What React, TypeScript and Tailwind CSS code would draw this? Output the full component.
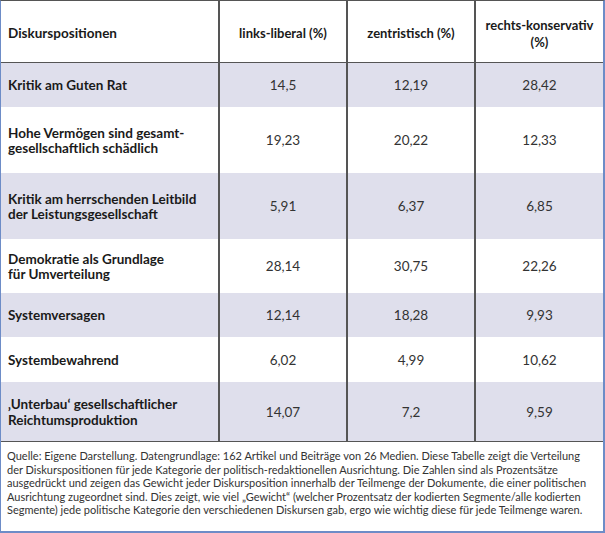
import React from "react";

type Row = { label: React.ReactNode; a: string; b: string; c: string; h: string; shaded: boolean };

const rows: Row[] = [
  { label: "Kritik am Guten Rat", a: "14,5", b: "12,19", c: "28,42", h: "h-[44px]", shaded: true },
  { label: <>Hohe Vermögen sind gesamt-<br />gesellschaftlich schädlich</>, a: "19,23", b: "20,22", c: "12,33", h: "h-[66px]", shaded: false },
  { label: <>Kritik am herrschenden Leitbild<br />der Leistungsgesellschaft</>, a: "5,91", b: "6,37", c: "6,85", h: "h-[66px]", shaded: true },
  { label: <>Demokratie als Grundlage<br />für Umverteilung</>, a: "28,14", b: "30,75", c: "22,26", h: "h-[54px]", shaded: false },
  { label: "Systemversagen", a: "12,14", b: "18,28", c: "9,93", h: "h-[44px]", shaded: true },
  { label: "Systembewahrend", a: "6,02", b: "4,99", c: "10,62", h: "h-[45px]", shaded: false },
  { label: <>‚Unterbau‘ gesellschaftlicher<br />Reichtumsproduktion</>, a: "14,07", b: "7,2", c: "9,59", h: "h-[59px]", shaded: true },
];

const captionLines = [
  "Quelle: Eigene Darstellung. Datengrundlage: 162 Artikel und Beiträge von 26 Medien. Diese Tabelle zeigt die Verteilung",
  "der Diskurspositionen für jede Kategorie der politisch-redaktionellen Ausrichtung. Die Zahlen sind als Prozentsätze",
  "ausgedrückt und zeigen das Gewicht jeder Diskursposition innerhalb der Teilmenge der Dokumente, die einer politischen",
  "Ausrichtung zugeordnet sind. Dies zeigt, wie viel „Gewicht“ (welcher Prozentsatz der kodierten Segmente/alle kodierten",
  "Segmente) jede politische Kategorie den verschiedenen Diskursen gab, ergo wie wichtig diese für jede Teilmenge waren.",
];

export default function App() {
  return (
    <div
      className="w-[605px] h-[533px] bg-white border-t border-t-[#555] border-l border-l-[#6d8cc7] border-r-2 border-r-[#6d8cc7] border-b-2 border-b-[#6d8cc7] flex flex-col text-[#1a1a1a]"
      style={{ fontFamily: "Lato, 'Noto Sans', sans-serif" }}
    >
      <div className="shrink-0 grid grid-cols-[217px_128px_128px_129px] h-[62px] border-b border-b-[#555] font-bold text-[13px] leading-[16.5px]">
        <div className="flex items-center pl-[7px] pt-[4px] text-[13.5px]">Diskurspositionen</div>
        <div className="flex items-center justify-center border-l-2 border-l-[#555] pt-[4px]">links-liberal (%)</div>
        <div className="flex items-center justify-center border-l-2 border-l-[#555] pt-[4px]">zentristisch (%)</div>
        <div className="flex items-center justify-center text-center border-l-2 border-l-[#555] pt-[4px]">rechts-konservativ<br />(%)</div>
      </div>
      {rows.map((r, i) => (
        <div
          key={i}
          className={`shrink-0 grid grid-cols-[217px_128px_128px_129px] ${r.h} ${r.shaded ? "bg-[#dfdfec]" : "bg-white"} text-[13.5px] leading-[15.5px]`}
        >
          <div className="flex items-center pl-[7px] pt-[2px] font-bold">
            <div>{r.label}</div>
          </div>
          <div className="flex items-center justify-center border-l-2 border-l-[#555] text-[#333] pt-[2px]">{r.a}</div>
          <div className="flex items-center justify-center border-l-2 border-l-[#555] text-[#333] pt-[2px]">{r.b}</div>
          <div className="flex items-center justify-center border-l-2 border-l-[#555] text-[#333] pt-[2px]">{r.c}</div>
        </div>
      ))}
      <div className="border-t border-t-[#555] flex-1 pl-[6px] pt-[7px] text-[11px] leading-[13.5px] text-[#333] whitespace-nowrap">
        {captionLines.map((l, i) => (
          <div key={i}>{l}</div>
        ))}
      </div>
    </div>
  );
}
